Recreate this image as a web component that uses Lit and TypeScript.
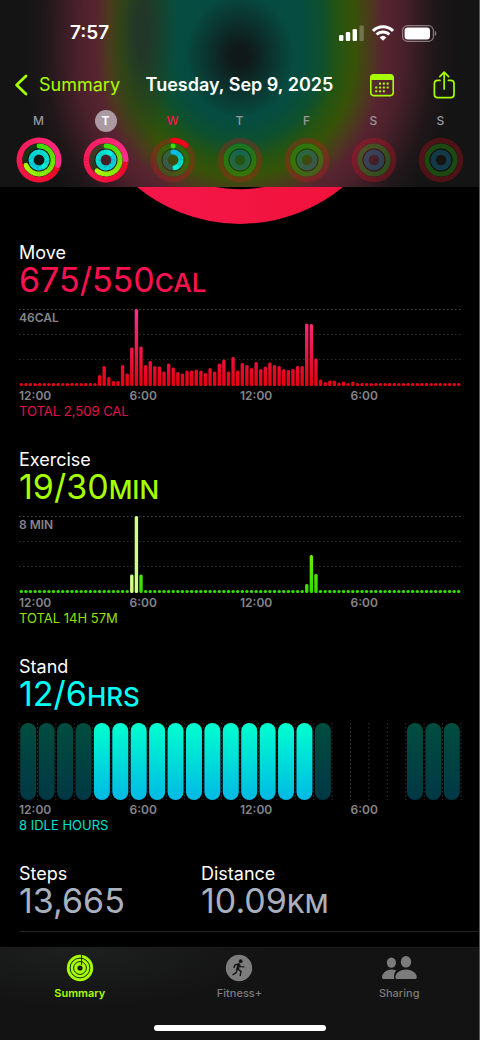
import { LitElement, html, svg, css } from "lit";
import { customElement, property } from "lit/decorators.js";
import { classMap } from "lit/directives/class-map.js";

type RGB = [number, number, number];

interface DayRings {
  letter: string;
  name: string;
  today?: boolean;
  selected?: boolean;
  move?: [number, number];
  exercise?: number;
  stand?: [number, number];
}

const DAYS: DayRings[] = [
  { letter: "M", name: "Monday", move: [105, 465], exercise: 248, stand: [145, 505] },
  { letter: "T", name: "Tuesday", selected: true, move: [88, 448], exercise: 220, stand: [30, 390] },
  { letter: "W", name: "Wednesday", today: true, move: [0, 41], exercise: 1, stand: [0, 165] },
  { letter: "T", name: "Thursday" },
  { letter: "F", name: "Friday" },
  { letter: "S", name: "Saturday" },
  { letter: "S", name: "Sunday" },
];

const SLOTS = 96;
const CHART_HEIGHT = 77;
const HOUR_LABELS = ["12:00", "6:00", "12:00", "6:00"];

const fill = (from: number, values: number[]): number[] => {
  const out = new Array(SLOTS).fill(3);
  values.forEach((v, i) => (out[from + i] = v));
  return out;
};

const MOVE = fill(17, [
  11, 20, 9, 5, 5, 21, 12.5, 38.5, 77, 39.5, 21, 25, 20, 19.5, 14.5, 22.5, 18.5, 14, 12.5, 15.5,
  15.5, 16.5, 15.5, 13, 18, 14.5, 22.5, 26.5, 14.5, 29, 15.5, 23, 21, 18, 24, 17, 19.5, 23.5, 21,
  20, 17, 16, 17, 20, 20, 62.5, 62, 27.5, 6.5, 4, 5.5, 5.5, 3.5, 4.5, 3, 4.5,
]);

const EXERCISE = fill(24, [18.5, 77, 18.5]);
EXERCISE[62] = 9;
EXERCISE[63] = 38;
EXERCISE[64] = 19;

/* One letter per hour: i = idle, a = stood, _ = nothing recorded. */
const STAND = "iiiiaaaaaaaaaaaai____iii";

const mix = (a: RGB, b: RGB, t: number) =>
  `rgb(${a.map((v, i) => Math.round(v + (b[i] - v) * t)).join(",")})`;

const point = (r: number, deg: number) => {
  const a = ((deg - 90) * Math.PI) / 180;
  return `${(24 + r * Math.cos(a)).toFixed(3)} ${(24 + r * Math.sin(a)).toFixed(3)}`;
};

/* An arc whose colour runs along its length, built from short strokes. */
const sweep = (r: number, width: number, start: number, end: number, a: RGB, b: RGB) => {
  const n = Math.max(1, Math.ceil((end - start) / 9));
  const step = (end - start) / n;
  return Array.from({ length: n }, (_, i) => {
    const s = start + i * step;
    const cap = i === n - 1 || (i === 0 && end - start < 350) ? "round" : "butt";
    return svg`<path d="M${point(r, s)} A${r} ${r} 0 0 1 ${point(r, s + step + (i < n - 1 ? 1 : 0))}"
      fill="none" stroke=${mix(a, b, i / Math.max(1, n - 1))} stroke-width=${width} stroke-linecap=${cap}></path>`;
  });
};

@customElement("status-bar")
class StatusBar extends LitElement {
  static styles = css`
    :host { display: block; }
    .bar {
      display: flex;
      justify-content: space-between;
      align-items: center;
      height: 24px;
      padding: 21px 42px 0 70px;
      color: #fff;
    }
    .time { font-size: 19px; line-height: 24px; font-weight: 600; }
    .icons { display: flex; align-items: center; gap: 8px; }
    svg { display: block; }
  `;
  render() {
    return html`<div class="bar">
      <time class="time">7:57</time>
      <div class="icons">
        <svg width="25" height="16" viewBox="0 0 25 16" fill="#fff" aria-label="Signal">
          <rect x="0" y="10" width="4.4" height="6" rx="1.2"></rect>
          <rect x="6.8" y="7" width="4.4" height="9" rx="1.2"></rect>
          <rect x="13.6" y="4" width="4.4" height="12" rx="1.2"></rect>
          <rect x="20.4" y="0.5" width="4.4" height="15.5" rx="1.2" opacity=".25"></rect>
        </svg>
        <svg width="22" height="16" viewBox="0 0 22 16" fill="none" stroke="#fff" stroke-width="2.9" aria-label="Wi-Fi">
          <path d="M1 5.9A14 14 0 0 1 21 5.9"></path>
          <path d="M4.6 9.6A9 9 0 0 1 17.4 9.6"></path>
          <path d="M7.6 12.4A5 5 0 0 1 14.4 12.4L11 15.8Z" fill="#fff" stroke="none"></path>
        </svg>
        <svg width="35" height="17" viewBox="0 0 35 17" aria-label="Battery">
          <rect x=".6" y=".6" width="30.8" height="15.8" rx="5" fill="none" stroke="#fff" stroke-opacity=".42" stroke-width="1.2"></rect>
          <rect x="2.6" y="2.6" width="25.4" height="11.8" rx="3.2" fill="#fff"></rect>
          <path d="M32.8 5.8C34.8 6.6 34.8 10.4 32.8 11.2Z" fill="#fff" opacity=".45"></path>
        </svg>
      </div>
    </div>`;
  }
}

@customElement("day-rings")
class DayRingsView extends LitElement {
  @property({ attribute: false }) day!: DayRings;

  static styles = css`
    :host { display: block; }
    .day {
      display: flex;
      flex-direction: column;
      align-items: center;
      gap: 4px;
      width: 100%;
      padding: 0;
      border: 0;
      background: none;
      font: inherit;
      color: #98989c;
    }
    .letter {
      width: 22px;
      height: 22px;
      border-radius: 50%;
      font-size: 12px;
      line-height: 22px;
      font-weight: 500;
      text-align: center;
    }
    .today { color: #f5124f; }
    .selected { background: #ab9aa1; color: #fff; font-weight: 700; }
    svg { display: block; }
  `;

  render() {
    const d = this.day;
    return html`<button class="day" aria-label=${d.name}>
      <span class=${classMap({ letter: true, today: !!d.today, selected: !!d.selected })}>${d.letter}</span>
      <svg width="48" height="48" viewBox="0 0 48 48">
        <g fill="none">
          <circle cx="24" cy="24" r="19.6" stroke="#e60f1e" stroke-opacity=".27" stroke-width="5.4"></circle>
          <circle cx="24" cy="24" r="14" stroke="#32d20f" stroke-opacity=${d.move ? 0.17 : 0.28} stroke-width="5"></circle>
          <circle cx="24" cy="24" r="7.9" stroke="#10a0d0" stroke-opacity=".27" stroke-width="5.2"></circle>
          <circle cx="24" cy="24" r="11.1" stroke="#000" stroke-opacity=".3" stroke-width="1"></circle>
        </g>
        ${d.move
          ? d.today
            ? sweep(19.6, 5.2, d.move[0], d.move[1], [238, 0, 20], [240, 5, 30])
            : sweep(19.6, 5.6, d.move[0], d.move[1], [238, 8, 36], [255, 46, 138])
          : null}
        ${d.exercise ? sweep(14, 4.8, 0, d.exercise, [60, 222, 0], [176, 250, 0]) : null}
        ${d.stand
          ? sweep(7.9, 5, d.stand[0], d.stand[1], d.today ? [0, 186, 228] : [0, 210, 228], [0, 240, 212])
          : null}
      </svg>
    </button>`;
  }
}

@customElement("activity-chart")
class ActivityChart extends LitElement {
  @property() heading = "";
  @property() amount = "";
  @property() unit = "";
  @property() peak = "";
  @property() total = "";
  @property() kind: "move" | "exercise" | "stand" = "move";

  static styles = css`
    :host { display: block; }
    .heading { margin: 0; color: #fff; font-size: 18px; line-height: 22px; font-weight: 400; }
    .value { margin: 0; font-size: 34px; line-height: 32px; font-weight: 400; }
    .unit { font-size: 26px; line-height: 26px; font-weight: 500; }
    .plot { position: relative; height: 77px; margin-top: 13px; }
    .plot svg { display: block; width: 100%; height: 77px; overflow: visible; }
    .peak { position: absolute; top: 1px; left: 0; color: #85858a; font-size: 12px; line-height: 15px; font-weight: 600; }
    .hours {
      display: grid;
      grid-template-columns: repeat(4, 1fr);
      margin-top: 2px;
      color: #85858a;
      font-size: 12px;
      line-height: 15px;
      font-weight: 600;
    }
    .total { margin: 0; font-size: 13px; line-height: 16px; }
    .move { color: #fc1150; }
    .exercise { color: #a6ff00; }
    .stand { color: #00fff6; }
    .move .total { color: #e01048; }
    .exercise .total { color: #93e000; }
    .stand .total { color: #00e0d0; }
  `;

  private grid() {
    return [0.5, 25.5, 50.5].map(
      (y, i) => svg`<line x1="0" x2="100%" y1=${y} y2=${y} stroke=${i ? "#2c2c2c" : "#484848"}
        stroke-width="1" stroke-dasharray="1.5 2.5"></line>`
    );
  }

  private bars(values: number[]) {
    return svg`${this.grid()}
      <g transform="translate(-1.7 0)">${values.map((v, i) => {
        const pale = this.kind === "exercise" && (i === 24 || i === 25);
        return svg`<rect x=${`${((i + 0.5) / SLOTS) * 100}%`} y=${CHART_HEIGHT - v} width="3.4" height=${v}
          rx="1.5" fill=${pale ? "#d2fd88" : "url(#tone)"}></rect>`;
      })}</g>`;
  }

  private capsules() {
    return svg`
      ${Array.from({ length: 25 }, (_, i) => svg`<line x1=${`${(i / 24) * 100}%`} x2=${`${(i / 24) * 100}%`}
        y1="0" y2="77" stroke="#333" stroke-width="1" stroke-dasharray="1.5 2.5"></line>`)}
      <g transform="translate(-8 0)">${[...STAND].map((c, i) =>
        c === "_"
          ? null
          : svg`<rect x=${`${((i + 0.5) / 24) * 100}%`} y="0" width="16" height="77" rx="8"
              fill=${c === "a" ? "url(#tone)" : "url(#idle)"}></rect>`
      )}</g>`;
  }

  render() {
    const tone = {
      move: ["#ff2f8c", "#e6000f"],
      exercise: ["#a6ff00", "#32dc00"],
      stand: ["#00ffcf", "#00b9e4"],
    }[this.kind];
    return html`<section class=${this.kind}>
      <h2 class="heading">${this.heading}</h2>
      <p class="value">${this.amount}<span class="unit">${this.unit}</span></p>
      <div class="plot">
        <svg role="img" aria-label=${`${this.heading} by hour`}>
          <defs>
            <linearGradient id="tone" gradientUnits="userSpaceOnUse" x1="0" y1="0" x2="0" y2="77">
              <stop offset="0" stop-color=${tone[0]}></stop>
              <stop offset="1" stop-color=${tone[1]}></stop>
            </linearGradient>
            <linearGradient id="idle" gradientUnits="userSpaceOnUse" x1="0" y1="0" x2="0" y2="77">
              <stop offset="0" stop-color="#004d3e"></stop>
              <stop offset="1" stop-color="#003845"></stop>
            </linearGradient>
          </defs>
          ${this.kind === "stand" ? this.capsules() : this.bars(this.kind === "move" ? MOVE : EXERCISE)}
        </svg>
        ${this.peak ? html`<span class="peak">${this.peak}</span>` : null}
      </div>
      <div class="hours">${HOUR_LABELS.map((h) => html`<span>${h}</span>`)}</div>
      <p class="total">${this.total}</p>
    </section>`;
  }
}

@customElement("tab-bar")
class TabBar extends LitElement {
  static styles = css`
    :host { display: block; }
    .tabs {
      display: grid;
      grid-template-columns: repeat(3, 1fr);
      padding-top: 6px;
      height: 71px;
      border-top: 1px solid #1b1b1b;
      background: radial-gradient(ellipse 190px 60px at 80px 0, #1e1f1f, #131313);
    }
    .tab {
      display: flex;
      flex-direction: column;
      align-items: center;
      gap: 4px;
      color: #7c7c7c;
      font-size: 11px;
      line-height: 14px;
      font-weight: 500;
      text-decoration: none;
    }
    .current { color: #a6ff00; font-weight: 600; }
    svg { display: block; }
    .base { background: #131313; padding-bottom: 9px; }
    .handle { width: 172px; height: 6px; margin: 0 auto; border-radius: 3px; background: #fff; }
  `;
  render() {
    return html`<nav class="tabs">
        <a class="tab current" href="#summary" aria-current="page">
          <svg width="28" height="28" viewBox="0 0 28 28">
            <circle cx="14" cy="14" r="13.2" fill="#a6ff00"></circle>
            <g fill="none" stroke="#1a1d12" stroke-width="1">
              <circle cx="14" cy="14" r="9.9"></circle>
              <circle cx="14" cy="14" r="6.4"></circle>
              <path d="M15.6 1V11"></path>
            </g>
            <circle cx="14" cy="14" r="2.6" fill="#1a1d12"></circle>
          </svg>
          <span>Summary</span>
        </a>
        <a class="tab" href="#fitness">
          <svg width="28" height="28" viewBox="0 0 28 28">
            <circle cx="14" cy="14" r="13.2" fill="#7c7c7c"></circle>
            <circle cx="15.7" cy="7.2" r="1.9" fill="#131313"></circle>
            <g fill="none" stroke="#131313" stroke-width="1.4" stroke-linecap="round" stroke-linejoin="round">
              <path d="M9 13.4L10.2 10.6L13.6 10.2L15.6 12.6L18.8 12.9"></path>
              <path d="M13.9 10.6L12.6 14.8" stroke-width="2.8"></path>
              <path d="M13.2 15.2L16 17.4L15.2 21.4"></path>
              <path d="M12.2 15.4L11.2 18.6L8 20.6"></path>
            </g>
          </svg>
          <span>Fitness+</span>
        </a>
        <a class="tab" href="#sharing">
          <svg width="36" height="28" viewBox="0 0 36 28" fill="#7c7c7c">
            <ellipse cx="10.4" cy="8.6" rx="4.6" ry="5.2"></ellipse>
            <path d="M15.2 16.6C13.8 15.8 12.2 15.4 10.4 15.4C5 15.4 1 19.4 1 23.2C1 24.4 1.8 25 3 25H13.4C12.6 22 13.2 18.8 15.2 16.6Z"></path>
            <ellipse cx="25" cy="7.8" rx="5.2" ry="5.8"></ellipse>
            <path d="M25 15.4C18.6 15.4 14.4 19.6 14.4 23.2C14.4 24.4 15.2 25 16.4 25H33.8C35 25 35.8 24.4 35.8 23.2C35.8 19.6 31.4 15.4 25 15.4Z"></path>
          </svg>
          <span>Sharing</span>
        </a>
      </nav>
      <div class="base"><div class="handle"></div></div>`;
  }
}

@customElement("app-root")
class AppRoot extends LitElement {
  static styles = css`
    :host {
      display: flex;
      flex-direction: column;
      box-sizing: border-box;
      min-height: 100vh;
      border-right: 1px solid #5a5a5a;
      background: #000;
      color: #fff;
      font-family: Inter, "Liberation Sans", sans-serif;
    }
    .top {
      --glow: #064a42 0%, #064c40 26%, #0d5030 34%, #245412 41%, #385208 48%, #4b3c1c 54%, #572430 60%,
        #4c212c 67%, #20171a 81%, #141414 90%;
      background:
        radial-gradient(ellipse 54px 62px at 50% 56px, #101919 15%, rgba(16, 25, 25, 0)),
        radial-gradient(ellipse 34px 120px at 142px 30px, rgba(34, 50, 44, 0.85) 20%, rgba(34, 50, 44, 0)),
        radial-gradient(ellipse 240px 900px at 50% 100%, var(--glow)) 0 0 / 100% 56px no-repeat,
        radial-gradient(ellipse 240px 252px at 50% 0, var(--glow)) 0 56px / 100% 131px no-repeat;
    }
    .bar {
      display: grid;
      grid-template-columns: 1fr auto 1fr;
      align-items: center;
      height: 32px;
      padding: 24px 14px 0;
    }
    .back {
      display: flex;
      align-items: center;
      gap: 11px;
      color: #a6ff00;
      font-size: 18px;
      line-height: 24px;
      text-decoration: none;
    }
    .title { margin: 0; font-size: 18px; line-height: 24px; font-weight: 600; white-space: nowrap; }
    .actions { display: flex; justify-content: flex-end; align-items: center; gap: 36px; padding-right: 8px; }
    .icon { display: block; padding: 0; border: 0; background: none; }
    svg { display: block; }
    .week { display: grid; grid-template-columns: repeat(7, 1fr); padding: 9px 5px 3px; }
    .hero { height: 37px; overflow: hidden; }
    .hero svg { margin: 0 auto; }
    .content {
      flex: 1;
      display: flex;
      flex-direction: column;
      gap: 30px;
      padding: 18px 0 15px 19px;
    }
    .chart { margin-right: 18px; }
    .totals {
      display: grid;
      grid-template-columns: 7fr 10fr;
      padding: 0 18px 14px 0;
      border-bottom: 1px solid #222;
      margin: 0;
    }
    .totals dt { font-size: 18px; line-height: 22px; }
    .totals dd { margin: 0; color: #a9b0bf; font-size: 34px; line-height: 32px; }
    .unit { font-size: 26px; line-height: 26px; font-weight: 500; }
  `;

  render() {
    return html`
      <header class="top">
        <status-bar></status-bar>
        <div class="bar">
          <a class="back" href="#summary">
            <svg width="14" height="22" viewBox="0 0 14 22" fill="none" stroke="#a6ff00" stroke-width="2.8"
              stroke-linecap="round" stroke-linejoin="round"><path d="M12 2L2.6 11L12 20"></path></svg>
            <span>Summary</span>
          </a>
          <h1 class="title">Tuesday, Sep 9, 2025</h1>
          <div class="actions">
            <button class="icon" aria-label="Calendar">
              <svg width="26" height="24" viewBox="0 0 26 24">
                <rect x="1.8" y="1.8" width="22.4" height="20.8" rx="3" fill="none" stroke="#a6ff00" stroke-width="1.6"></rect>
                <path d="M1.6 7V4.4A3 3 0 0 1 4.6 1.4H21.4A3 3 0 0 1 24.4 4.4V7Z" fill="#a6ff00"></path>
                <g fill="#a6ff00">
                  ${[
                    [10, 10.2], [13.8, 10.2], [17.6, 10.2],
                    [6.2, 14], [10, 14], [13.8, 14], [17.6, 14],
                    [6.2, 17.8], [10, 17.8], [13.8, 17.8],
                  ].map(([x, y]) => svg`<rect x=${x} y=${y - 0.6} width="2.1" height="2.1" rx=".6"></rect>`)}
                </g>
              </svg>
            </button>
            <button class="icon" aria-label="Share">
              <svg width="26" height="30" viewBox="0 0 26 30" fill="none" stroke="#a6ff00" stroke-width="1.7"
                stroke-linecap="round" stroke-linejoin="round">
                <path d="M9 10.4H6.6A3.2 3.2 0 0 0 3.4 13.6V24.4A3.2 3.2 0 0 0 6.6 27.6H19.8A3.2 3.2 0 0 0 23 24.4V13.6A3.2 3.2 0 0 0 19.8 10.4H17.4"></path>
                <path d="M13.2 19V2.4M8.8 6.6L13.2 2.2L17.6 6.6"></path>
              </svg>
            </button>
          </div>
        </div>
        <div class="week">${DAYS.map((d) => html`<day-rings .day=${d}></day-rings>`)}</div>
      </header>
      <main>
        <div class="hero">
          <svg width="324" height="37" viewBox="0 125 324 37">
            <defs>
              <linearGradient id="arc"><stop offset="0" stop-color="#f5174c"></stop><stop offset="1" stop-color="#f01238"></stop></linearGradient>
            </defs>
            <circle cx="162" cy="0" r="144.6" fill="none" stroke="url(#arc)" stroke-width="34.6"></circle>
          </svg>
        </div>
        <div class="content">
          <activity-chart class="chart" kind="move" heading="Move" amount="675/550" unit="CAL" peak="46CAL" total="TOTAL 2,509 CAL"></activity-chart>
          <activity-chart class="chart" kind="exercise" heading="Exercise" amount="19/30" unit="MIN" peak="8 MIN" total="TOTAL 14H 57M"></activity-chart>
          <activity-chart class="chart" kind="stand" heading="Stand" amount="12/6" unit="HRS" total="8 IDLE HOURS"></activity-chart>
          <dl class="totals">
            <div><dt>Steps</dt><dd>13,665</dd></div>
            <div><dt>Distance</dt><dd>10.09<span class="unit">KM</span></dd></div>
          </dl>
        </div>
      </main>
      <tab-bar></tab-bar>
    `;
  }
}
